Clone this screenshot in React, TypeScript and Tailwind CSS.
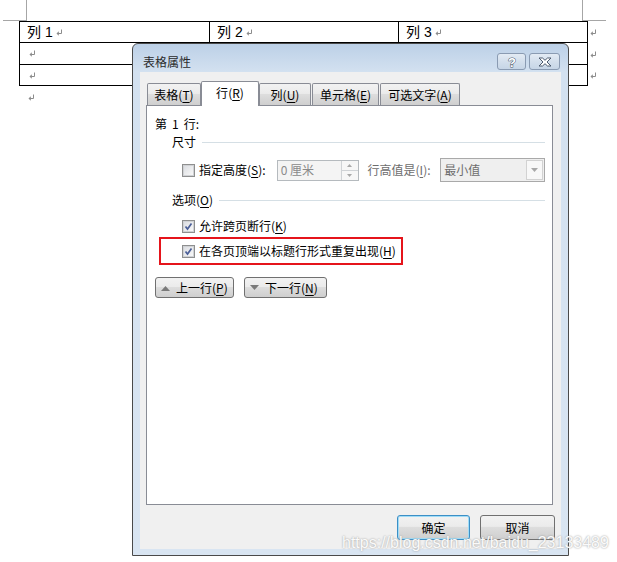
import React from "react";

const ui = "font-['Noto_Sans_CJK_SC',sans-serif] text-[12px] leading-[16px]";

function ReturnMark() {
  return (
    <svg width="7" height="7" viewBox="0 0 7 7" className="shrink-0">
      <path d="M5.5 0.5V4.5H2" fill="none" stroke="#8c8c8c" strokeWidth="1" />
      <path d="M0.5 4.5L2.8 2.3V6.7Z" fill="#8c8c8c" />
    </svg>
  );
}

function Hot({ text, k }: { text: string; k: string }) {
  return (
    <>
      {text}(<span className="underline underline-offset-2">{k}</span>)
    </>
  );
}

function Checkbox({ checked }: { checked?: boolean }) {
  return (
    <span className="flex h-[13px] w-[13px] shrink-0 items-center justify-center border border-[#8e8f8f] bg-white">
      <span className="flex h-[11px] w-[11px] items-center justify-center border border-[#d0d2d5] bg-[linear-gradient(135deg,#dcdee2,#f8f8f8)]">
        {checked && (
          <svg width="9" height="9" viewBox="0 0 9 9">
            <path d="M1.5 4.5L3.5 7L7.5 1.5" fill="none" stroke="#4b5f98" strokeWidth="1.7" />
          </svg>
        )}
      </span>
    </span>
  );
}

function Tab({ children, w, selected }: { children: React.ReactNode; w: string; selected?: boolean }) {
  if (selected) {
    return (
      <div className={`${w} relative z-10 -mb-px flex h-[25px] items-center justify-center rounded-t-[2px] border border-b-0 border-[#898c95] bg-white pb-[2px]`}>
        {children}
      </div>
    );
  }
  return (
    <div className={`${w} flex h-[22px] items-center justify-center rounded-t-[2px] border border-b-0 border-[#898c95] bg-[linear-gradient(to_bottom,#f2f2f2,#ebebeb_45%,#dddddd_50%,#cfcfcf)]`}>
      {children}
    </div>
  );
}

function GroupHead({ children }: { children: React.ReactNode }) {
  return (
    <div className="ml-[17px] flex h-[16px] items-center">
      <span>{children}</span>
      <span className="ml-[6px] h-px flex-1 bg-[#d5dfe5]" />
    </div>
  );
}

function NavButton({ up, w, children }: { up?: boolean; w: string; children: React.ReactNode }) {
  return (
    <div className={`${w} flex h-[21px] items-center rounded-[3px] border border-[#707070] bg-[linear-gradient(to_bottom,#f2f2f2,#ebebeb_45%,#dddddd_50%,#cfcfcf)] pl-[5px]`}>
      <svg width="9" height="6" viewBox="0 0 9 6">
        {up ? <path d="M0 6L4.5 1L9 6Z" fill="#7a7a7a" /> : <path d="M0 0L4.5 5L9 0Z" fill="#7a7a7a" />}
      </svg>
      <span className="ml-[6px]">{children}</span>
    </div>
  );
}

function DialogButton({ w, primary, children }: { w: string; primary?: boolean; children: React.ReactNode }) {
  return (
    <div
      className={`${w} flex h-[25px] items-center justify-center rounded-[3px] border bg-[linear-gradient(to_bottom,#f2f2f2,#ebebeb_45%,#dddddd_50%,#cfcfcf)] leading-[14px] ${
        primary ? "border-[#3c8fc6] shadow-[inset_0_0_0_1px_#9fdcf7]" : "border-[#707070]"
      }`}
    >
      {children}
    </div>
  );
}

function TitleButton({ w, children }: { w: string; children: React.ReactNode }) {
  return (
    <div className={`${w} flex h-[17px] items-center justify-center rounded-[3px] border border-[#8a9bb2] bg-[linear-gradient(to_bottom,#e3ebf4,#d3dfec_50%,#c6d5e6)]`}>
      {children}
    </div>
  );
}

export default function App() {
  return (
    <div className="relative h-[562px] w-[617px] overflow-hidden bg-white">
      {/* Document page */}
      <div className="flex h-[21px]">
        <div className="ml-[3px] h-[21px] w-[24px] border-b border-r border-[#a6a6a6]" />
        <div className="ml-[555px] h-[21px] w-[24px] border-b border-l border-[#a6a6a6]" />
      </div>

      <div className="ml-[19px] font-['Liberation_Sans','Noto_Sans_CJK_SC',sans-serif] text-[14px] text-black">
        <div className="flex items-center">
          <div className="flex w-[569px] border-l border-t border-black">
            <div className="flex h-[21px] w-[190px] items-center gap-[3px] border-b border-r border-black pl-[7px]">
              <span className="leading-[16px]">列 1</span>
              <ReturnMark />
            </div>
            <div className="flex h-[21px] w-[189px] items-center gap-[3px] border-b border-r border-black pl-[7px]">
              <span className="leading-[16px]">列 2</span>
              <ReturnMark />
            </div>
            <div className="flex h-[21px] w-[189px] items-center gap-[3px] border-b border-r border-black pl-[7px]">
              <span className="leading-[16px]">列 3</span>
              <ReturnMark />
            </div>
          </div>
          <span className="ml-[2px]">
            <ReturnMark />
          </span>
        </div>
        {[22, 21].map((h, i) => (
          <div key={i} className="flex items-center">
            <div className={`flex w-[569px] border-l border-black ${h === 22 ? "h-[22px]" : "h-[21px]"}`}>
              <div className="flex w-[190px] items-center border-b border-r border-black pl-[9px]">
                <ReturnMark />
              </div>
              <div className="w-[189px] border-b border-r border-black" />
              <div className="w-[189px] border-b border-r border-black" />
            </div>
            <span className="ml-[2px]">
              <ReturnMark />
            </span>
          </div>
        ))}
        <div className="ml-[9px] mt-[8px]">
          <ReturnMark />
        </div>
      </div>

      {/* Dialog window */}
      <div className={`${ui} absolute left-[132px] top-[43px] flex h-[513px] w-[437px] flex-col rounded-t-[6px] border border-[#4a4a4a] bg-[linear-gradient(to_bottom,#bcd0e7,#d3e1f0_28px,#d9e5f2)] text-black`}>
        <div className="flex h-[28px] shrink-0 items-start">
          <span className="ml-[10px] mt-[10px] text-[#2b2b2b]">表格属性</span>
          <div className="ml-auto mr-[8px] mt-[9px] flex gap-[3px]">
            <TitleButton w="w-[29px]">
              <svg width="12" height="13" viewBox="0 0 12 13">
                <text
                  x="6"
                  y="11.5"
                  textAnchor="middle"
                  fontFamily="Liberation Sans, sans-serif"
                  fontWeight="bold"
                  fontSize="13"
                  fill="#ffffff"
                  stroke="#4d5b6e"
                  strokeWidth="1"
                  paintOrder="stroke"
                >
                  ?
                </text>
              </svg>
            </TitleButton>
            <TitleButton w="w-[31px]">
              <svg width="14" height="10" viewBox="0 0 14 10">
                <path
                  d="M1 1H4.5L7 3.3L9.5 1H13L9 5L13 9H9.5L7 6.7L4.5 9H1L5 5Z"
                  fill="#ffffff"
                  stroke="#4d5b6e"
                  strokeWidth="1"
                  strokeLinejoin="round"
                />
              </svg>
            </TitleButton>
          </div>
        </div>

        <div className="mx-[7px] mb-[6px] flex flex-1 flex-col bg-[#f0f0f0]">
          {/* Tabs */}
          <div className="ml-[7px] mt-[9px] flex h-[24px] items-end">
            <Tab w="w-[54px]">
              <Hot text="表格" k="T" />
            </Tab>
            <Tab w="w-[58px]" selected>
              <Hot text="行" k="R" />
            </Tab>
            <Tab w="w-[52px]">
              <Hot text="列" k="U" />
            </Tab>
            <div className="ml-px">
              <Tab w="w-[67px]">
                <Hot text="单元格" k="E" />
              </Tab>
            </div>
            <div className="ml-px">
              <Tab w="w-[80px]">
                <Hot text="可选文字" k="A" />
              </Tab>
            </div>
          </div>

          {/* Tab panel */}
          <div className="ml-[6px] flex h-[400px] w-[407px] flex-col border border-[#898c95] bg-white pl-[8px] pr-[7px] pt-[10px]">
            <div className="flex h-[16px]">
              <span>第</span>
              <span className="ml-[5px]">1</span>
              <span className="ml-[5px]">行:</span>
            </div>

            <div className="mt-[2px]">
              <GroupHead>尺寸</GroupHead>
            </div>

            <div className="ml-[27px] mt-[8px] flex h-[24px] items-center">
              <Checkbox />
              <span className="ml-[4px] w-[78px]">
                <Hot text="指定高度" k="S" />:
              </span>
              <div className="flex h-[21px] w-[82px] border border-[#b5babe] bg-[#f4f4f4]">
                <span className="flex-1 pl-[3px] pt-[1px] text-[#8a8a8a]">0 厘米</span>
                <div className="flex w-[17px] flex-col border-l border-[#d0d3d6] bg-[#f7f7f7]">
                  <div className="flex flex-1 items-center justify-center border-b border-[#d0d3d6]">
                    <svg width="5" height="3" viewBox="0 0 5 3">
                      <path d="M0 3L2.5 0L5 3Z" fill="#a8a8a8" />
                    </svg>
                  </div>
                  <div className="flex flex-1 items-center justify-center">
                    <svg width="5" height="3" viewBox="0 0 5 3">
                      <path d="M0 0L2.5 3L5 0Z" fill="#a8a8a8" />
                    </svg>
                  </div>
                </div>
              </div>
              <span className="ml-[9px] w-[73px] text-[#6d6d6d]">
                <Hot text="行高值是" k="I" />:
              </span>
              <div className="flex h-[24px] w-[105px] border border-[#a9a9a9] bg-[#efefef]">
                <span className="flex flex-1 items-center pl-[3px] text-[#6d6d6d]">最小值</span>
                <div className="my-px mr-px flex w-[17px] items-center justify-center border border-[#d2d2d2] bg-[#f8f8f8]">
                  <svg width="7" height="4" viewBox="0 0 7 4">
                    <path d="M0 0L3.5 4L7 0Z" fill="#a8a8a8" />
                  </svg>
                </div>
              </div>
            </div>

            <div className="mt-[10px]">
              <GroupHead>
                选项(<span className="underline underline-offset-2">O</span>)
              </GroupHead>
            </div>

            <div className="ml-[27px] mt-[10px] flex h-[16px] items-center">
              <Checkbox checked />
              <span className="ml-[4px]">
                <Hot text="允许跨页断行" k="K" />
              </span>
            </div>

            <div className="ml-[4px] mt-[3px] flex h-[28px] w-[244px] items-center border-2 border-[#e5141b] pl-[21px]">
              <Checkbox checked />
              <span className="ml-[4px]">
                <Hot text="在各页顶端以标题行形式重复出现" k="H" />
              </span>
            </div>

            <div className="mt-[12px] flex">
              <NavButton up w="w-[79px]">
                <Hot text="上一行" k="P" />
              </NavButton>
              <div className="ml-[10px]">
                <NavButton w="w-[83px]">
                  <Hot text="下一行" k="N" />
                </NavButton>
              </div>
            </div>
          </div>

          {/* Bottom buttons */}
          <div className="mt-[10px] flex justify-end gap-[10px] pr-[6px]">
            <DialogButton w="w-[73px]" primary>
              确定
            </DialogButton>
            <DialogButton w="w-[75px]">取消</DialogButton>
          </div>
        </div>
      </div>

      {/* Watermark */}
      <div className="absolute left-[342px] top-[535px] font-['Liberation_Sans',sans-serif] text-[16px] leading-[16px] text-[#fafafa] [text-shadow:0_0_2px_#8f8f8f]">
        https://blog.csdn.net/baidu_23133489
      </div>
    </div>
  );
}
